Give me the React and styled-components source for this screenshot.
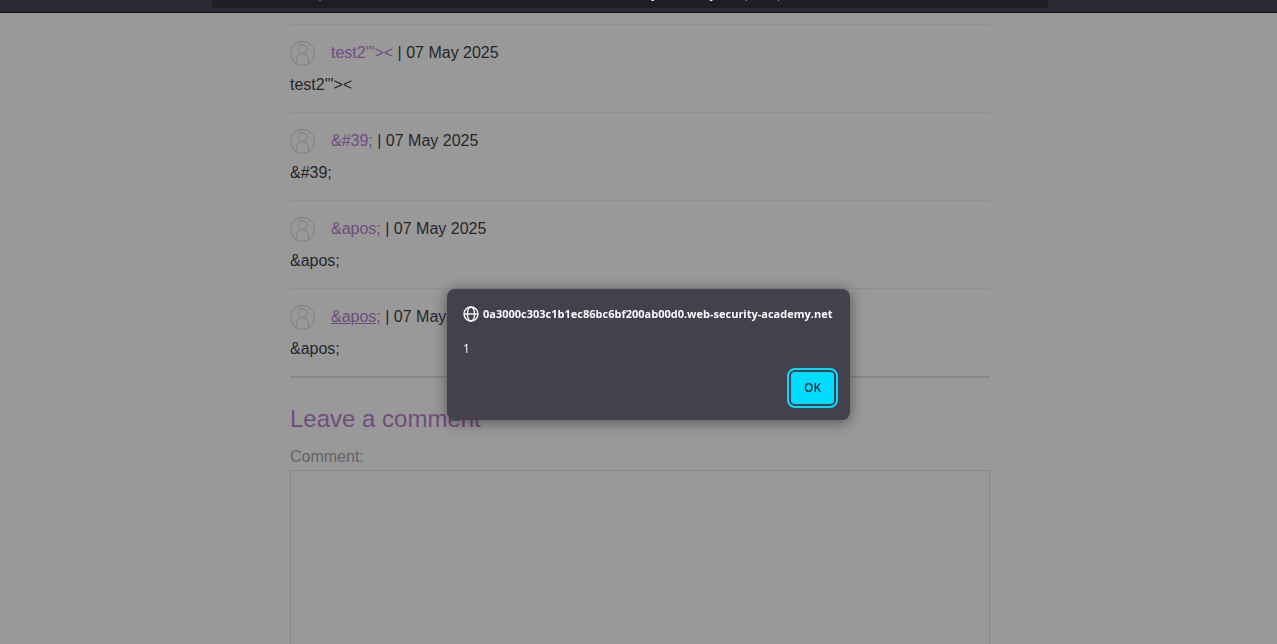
import React from "react";
import styled, { createGlobalStyle } from "styled-components";

const GlobalStyle = createGlobalStyle`
  * { box-sizing: border-box; }
  html, body { margin: 0; background: #99999a; }
  body { font-family: "Liberation Sans", Arial, sans-serif; font-size: 16px; line-height: 24px; color: #262629; }
`;

const Shell = styled.div`
  height: 100vh;
  overflow: hidden;
`;

const Toolbar = styled.header`
  display: flex;
  justify-content: center;
  height: 13px;
  padding: 0 17px 4px 0;
  background: #2b2a33;
  border-bottom: 1px solid #0c0c0d;
`;

const AddressBar = styled.div`
  display: flex;
  align-items: flex-end;
  width: 836px;
  padding-left: 89px;
  overflow: hidden;
  border-radius: 0 0 4px 4px;
  background: #1e1d24;
  color: #8f8f94;
  font: 13px/20px "Open Sans", "Noto Sans", sans-serif;
  white-space: nowrap;
`;

const Address = styled.span`
  margin-bottom: 5px;
`;

const Host = styled.span`
  color: #fbfbfe;
`;

const Page = styled.main`
  width: 100%;
  max-width: 703px;
  margin: 0 auto;
  padding: 11px 0 0 3px;
`;

const Comment = styled.section`
  padding: 16px 0 15px;
  border-top: 1px solid #8f8f91;
`;

const Author = styled.div`
  display: flex;
  gap: 16px;
  height: 32px;
`;

const Avatar = styled.svg`
  flex: none;
  width: 25px;
  height: 25px;
  fill: none;
  stroke: #848487;
  stroke-width: 1.2;
`;

const AuthorLink = styled.a`
  color: #704c7d;
  text-decoration: ${(p) => (p.$underlined ? "underline" : "none")};
`;

const Body = styled.p`
  margin: 0;
`;

const Divider = styled.hr`
  height: 2px;
  margin: 0 0 25px;
  border: 0;
  background: #868689;
`;

const Title = styled.h2`
  margin: 0 0 10px;
  color: #704c7d;
  font-size: 24px;
  font-weight: 400;
  line-height: 32px;
`;

const Form = styled.form`
  display: flex;
  flex-direction: column;
`;

const Label = styled.label`
  margin-bottom: 1px;
  color: #626265;
`;

const TextArea = styled.textarea`
  width: 100%;
  height: 288px;
  padding: 8px;
  border: 1px solid #87878a;
  border-radius: 0;
  outline: none;
  background: transparent;
  font: inherit;
  resize: none;
`;

const Backdrop = styled.div`
  position: fixed;
  inset: 0;
  display: flex;
  align-items: flex-start;
  justify-content: center;
  padding: 289px 0 0 20px;
`;

const Dialog = styled.div`
  display: flex;
  flex-direction: column;
  width: 403px;
  padding: 17px 16px 16px;
  border-radius: 8px;
  background: #42414d;
  box-shadow: 0 2px 14px rgba(12, 12, 13, 0.5);
  color: #fbfbfe;
  font: 12px/16px "Open Sans", "Noto Sans", sans-serif;
`;

const Origin = styled.div`
  display: flex;
  align-items: center;
  gap: 4px;
  font-size: 11px;
  font-weight: 700;
  white-space: nowrap;
`;

const Globe = styled.svg`
  flex: none;
  width: 16px;
  height: 16px;
  fill: none;
  stroke: currentColor;
  stroke-width: 1.4;
`;

const Message = styled.p`
  margin: 19px 0 15px;
`;

const Accept = styled.button`
  align-self: flex-end;
  width: 43px;
  height: 32px;
  padding: 0;
  border: 0;
  border-radius: 4px;
  outline: 2px solid #00ddff;
  outline-offset: 2px;
  background: #00ddff;
  color: #2b2a33;
  font: 600 12px/16px "Open Sans", "Noto Sans", sans-serif;
`;

const comments = [
  { author: "test2'\"><", text: "test2'\"><" },
  { author: "&#39;", text: "&#39;" },
  { author: "&apos;", text: "&apos;" },
  { author: "&apos;", text: "&apos;", underlined: true },
];

const host = "0a3000c303c1b1ec86bc6bf200ab00d0.web-security-academy.net";

export default function App() {
  return (
    <Shell>
      <GlobalStyle />
      <Toolbar>
        <AddressBar>
          <Address>
            https://0a3000c303c1b1ec86bc6bf200ab00d0.<Host>web-security-academy.net</Host>/post?postId=1
          </Address>
        </AddressBar>
      </Toolbar>
      <Page>
        {comments.map((c, i) => (
          <Comment key={i}>
            <Author>
              <Avatar viewBox="0 0 25 25" aria-hidden="true">
                <circle cx="12.5" cy="12.5" r="11.9" />
                <circle cx="12.5" cy="8" r="4.3" />
                <path d="M6.3 22.5V19a6.2 6.4 0 0 1 12.4 0V22.5" />
              </Avatar>
              <div>
                <AuthorLink href="#author" $underlined={c.underlined}>{c.author}</AuthorLink>
                {" | 07 May 2025"}
              </div>
            </Author>
            <Body>{c.text}</Body>
          </Comment>
        ))}
        <Divider />
        <Title>Leave a comment</Title>
        <Form>
          <Label htmlFor="comment">Comment:</Label>
          <TextArea id="comment" />
        </Form>
      </Page>
      <Backdrop>
        <Dialog role="alertdialog" aria-labelledby="origin" aria-describedby="message">
          <Origin>
            <Globe viewBox="0 0 16 16" aria-hidden="true">
              <circle cx="8" cy="8" r="7" />
              <ellipse cx="8" cy="8" rx="3.6" ry="7" />
              <path d="M1 8h14" />
            </Globe>
            <span id="origin">{host}</span>
          </Origin>
          <Message id="message">1</Message>
          <Accept type="button">OK</Accept>
        </Dialog>
      </Backdrop>
    </Shell>
  );
}
